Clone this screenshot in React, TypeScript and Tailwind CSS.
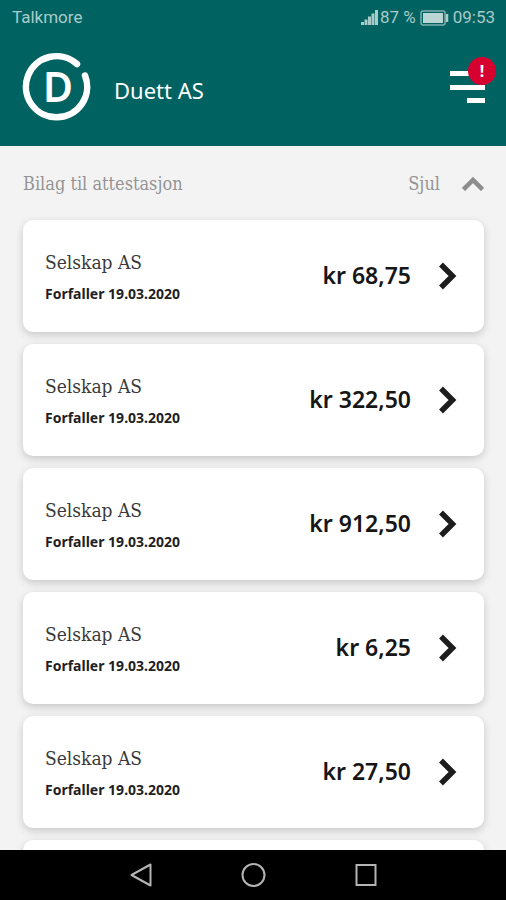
const invoices = [
  { id: 1, company: 'Selskap AS', due: '19.03.2020', amount: '68,75' },
  { id: 2, company: 'Selskap AS', due: '19.03.2020', amount: '322,50' },
  { id: 3, company: 'Selskap AS', due: '19.03.2020', amount: '912,50' },
  { id: 4, company: 'Selskap AS', due: '19.03.2020', amount: '6,25' },
  { id: 5, company: 'Selskap AS', due: '19.03.2020', amount: '27,50' },
]

function StatusBar() {
  return (
    <div className="flex h-9 items-center justify-between pl-3 pr-[11px] font-['Roboto',sans-serif] text-[17px] text-[#a9cbca]">
      <span>Talkmore</span>
      <div className="flex items-center">
        <svg width="17" height="16" viewBox="0 0 17 16" fill="currentColor" aria-hidden="true">
          <path d="M0 12h3v3H0zM3.500 9.500h3V15h-3zM7 6.500h3V15H7zM10.500 3.500h3V15h-3zM14 0h3v15h-3z" />
        </svg>
        <span className="ml-0.5">87 %</span>
        <svg className="ml-1" width="29" height="16" viewBox="0 0 29 16" aria-hidden="true">
          <rect x="1" y="1" width="24" height="14" rx="2" fill="none" stroke="#7fb0af" strokeWidth="1.500" />
          <rect x="3" y="3" width="20" height="10" fill="#b9d6d5" />
          <path d="M27 4v8" stroke="#a9cbca" strokeWidth="2.500" />
        </svg>
        <span className="ml-1">09:53</span>
      </div>
    </div>
  )
}

function Logo() {
  return (
    <svg width="70" height="70" viewBox="0 0 70 70" aria-hidden="true">
      <path d="M63 23.500A30.600 30.600 0 1 1 55 12" fill="none" stroke="#fff" strokeWidth="6.500" strokeLinecap="round" />
      <text
        x="36"
        y="49"
        textAnchor="middle"
        className="font-['Open_Sans',sans-serif] text-[39px] font-normal"
        fill="#fff"
        stroke="#fff"
        strokeWidth="2"
        strokeLinejoin="round"
      >
        D
      </text>
    </svg>
  )
}

function Header() {
  return (
    <header className="shrink-0 bg-[#006261] pb-6">
      <StatusBar />
      <div className="flex items-center justify-between pt-4 pl-[22px] pr-[21px]">
        <div className="flex items-center gap-[22px]">
          <Logo />
          <h1 className="pt-1.5 font-['Noto_Sans',sans-serif] text-[22px] leading-7 text-white">Duett AS</h1>
        </div>
        <button type="button" aria-label="Meny" className="relative">
          <svg width="35" height="32" viewBox="0 0 35 32" fill="#fff" aria-hidden="true">
            <path d="M0 0h35v5H0zM0 14h35v5H0zM17 27h18v5H17z" />
          </svg>
          <span className="absolute -top-[14px] -right-[11px] flex size-7 items-center justify-center rounded-full bg-[#d6002f] font-['Noto_Sans',sans-serif] text-base font-bold text-white">
            !
          </span>
        </button>
      </div>
    </header>
  )
}

function InvoiceCard({ company, due, amount }: { company: string; due: string; amount: string }) {
  return (
    <button
      type="button"
      className="flex h-28 w-full items-center justify-between rounded-[10px] bg-white pl-[22px] pr-[27px] text-left shadow-[0_3px_8px_rgba(0,0,0,0.18)]"
    >
      <span className="flex flex-col gap-2.5 pt-0.5">
        <span className="font-['Roboto_Slab','DejaVu_Serif_Condensed','DejaVu_Serif',serif] text-[19px] leading-6 text-[#3a3a3a]">{company}</span>
        <span className="font-['Noto_Sans',sans-serif] text-sm leading-5 font-bold text-[#1f1f1f]">Forfaller {due}</span>
      </span>
      <span className="flex items-center gap-7">
        <span className="pb-0.5 font-['Noto_Sans',sans-serif] text-[23px] leading-7 font-semibold text-[#161616]">kr {amount}</span>
        <svg width="18" height="28" viewBox="0 0 18 28" fill="none" stroke="#1d1d1d" strokeWidth="5.500" aria-hidden="true">
          <path d="M2 2.500 13.500 14 2 25.500" />
        </svg>
      </span>
    </button>
  )
}

function NavBar() {
  return (
    <nav className="flex h-[50px] shrink-0 items-center justify-center gap-[88px] bg-black text-[#b4b4b4]">
      <button type="button" aria-label="Tilbake">
        <svg width="24" height="26" viewBox="0 0 24 26" fill="none" stroke="currentColor" strokeWidth="2" strokeLinejoin="round">
          <path d="M22.500 2.500v21L3.500 13z" />
        </svg>
      </button>
      <button type="button" aria-label="Hjem">
        <svg width="26" height="26" viewBox="0 0 26 26" fill="none" stroke="currentColor" strokeWidth="2">
          <circle cx="13.500" cy="13" r="11" />
        </svg>
      </button>
      <button type="button" aria-label="Oversikt">
        <svg width="24" height="26" viewBox="0 0 24 26" fill="none" stroke="currentColor" strokeWidth="2">
          <rect x="2.500" y="3" width="19" height="20" />
        </svg>
      </button>
    </nav>
  )
}

export default function App() {
  return (
    <div className="flex h-screen flex-col bg-[#f3f3f3]">
      <Header />
      <main className="min-h-0 flex-1 overflow-hidden pl-[23px] pr-[22px]">
        <div className="flex h-[74px] items-center justify-between pt-0.5 font-['Roboto_Slab','DejaVu_Serif_Condensed','DejaVu_Serif',serif] text-lg text-[#939393]">
          <h2>Bilag til attestasjon</h2>
          <button type="button" className="flex items-center gap-[22px]">
            Sjul
            <svg width="22" height="14" viewBox="0 0 22 14" fill="none" stroke="#8d8d8d" strokeWidth="4.500" aria-hidden="true">
              <path d="M1.500 12.500 11 3l9.500 9.500" />
            </svg>
          </button>
        </div>
        <div className="flex flex-col gap-3">
          {invoices.map((invoice) => (
            <InvoiceCard key={invoice.id} company={invoice.company} due={invoice.due} amount={invoice.amount} />
          ))}
          <div className="h-28 rounded-[10px] bg-white shadow-[0_3px_8px_rgba(0,0,0,0.18)]" />
        </div>
      </main>
      <NavBar />
    </div>
  )
}
